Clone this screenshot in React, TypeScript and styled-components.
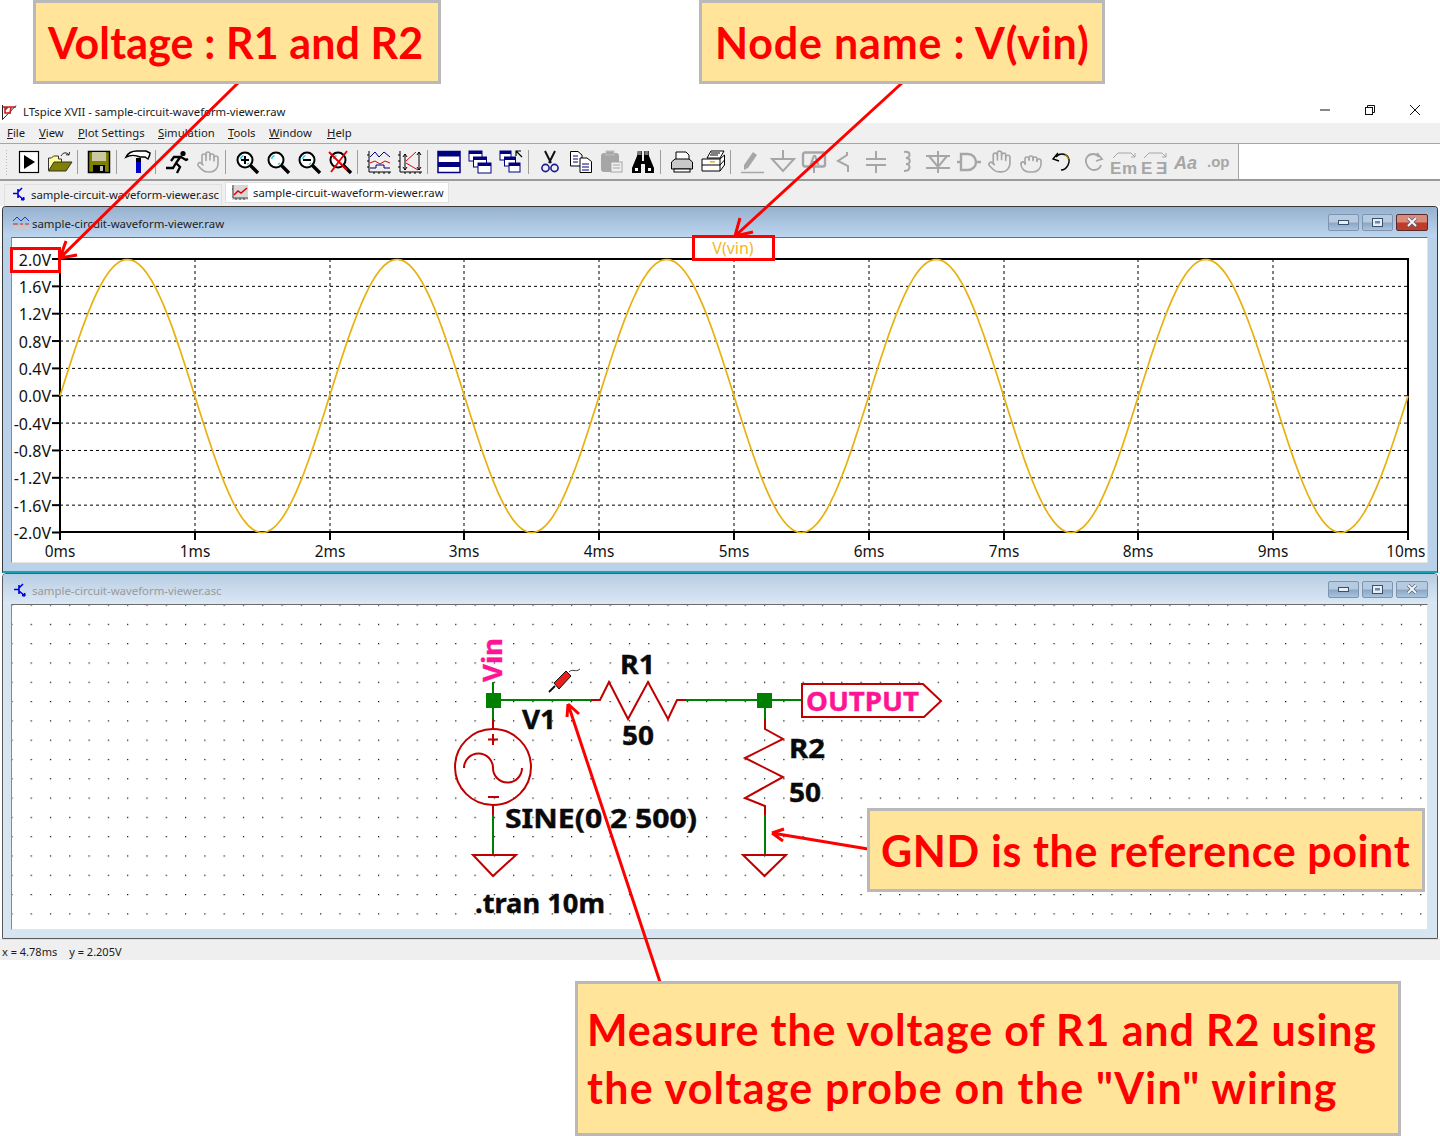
import React from 'react';
import styled, { createGlobalStyle } from 'styled-components';
import { Hand, Grab } from 'lucide-react';

const Global = createGlobalStyle`
  html, body { margin: 0; padding: 0; background: #fff; }
  body { font-family: "Noto Sans", "Open Sans", sans-serif; }
`;

const Page = styled.div`
  position: relative; width: 1440px; height: 1136px; padding-top: 100px;
  box-sizing: border-box; overflow: hidden; background: #fff; color: #1a1a1a;
`;
const TitleBar = styled.div`
  display: flex; align-items: center; height: 23px; padding: 0 0 0 2px; font-size: 11.3px; background: #fff;
`;
const AppTitle = styled.span`
  margin-left: 6px; flex: 1;
`;
const WinControls = styled.div`
  display: flex; align-items: center; padding-right: 19px; gap: 33px; padding-bottom: 3px;
`;
const MenuBar = styled.nav`
  display: flex; align-items: center; height: 20px; padding: 0 0 2px 7px; box-sizing: border-box; background: #f0f0f0; font-size: 11.3px;
`;
const MenuItem = styled.span<{ $w: number }>`
  width: ${p => p.$w}px; white-space: nowrap;
`;
const ToolbarRow = styled.div`
  display: flex; height: 38px; box-sizing: border-box; border-top: 1px solid #a6a6a6; border-bottom: 2px solid #9a9a9a; background: #fff;
`;
const Toolbar = styled.div`
  display: flex; align-items: center; width: 1239px; box-sizing: border-box; background: #efefef; border-right: 1px solid #a6a6a6;
`;
const Grip = styled.div`
  width: 13px; height: 26px; flex: none; box-sizing: border-box; margin-left: 0;
  background-image: radial-gradient(#b5b5b5 0.8px, transparent 1px);
  background-size: 3px 3px; background-repeat: repeat-y; background-position: 5px 0;
`;
const ToolButton = styled.div`
  width: 31px; height: 24px; flex: none; display: flex; align-items: center; justify-content: center;
  svg { display: block; overflow: visible; }
`;
const ToolSep = styled.div`
  width: 8px; height: 24px; flex: none; box-sizing: border-box; padding-left: 2px;
  &::before { content: ''; display: block; width: 1px; height: 24px; background: #9d9d9d; }
`;
const TabStrip = styled.div`
  display: flex; align-items: flex-end; height: 25px; box-sizing: border-box; padding: 0 0 0 4px; gap: 3px; background: #efefef;
`;
const Tab = styled.div<{ $active?: boolean }>`
  display: flex; align-items: center; box-sizing: border-box; font-size: 11.3px; white-space: nowrap;
  height: ${p => (p.$active ? 21 : 22)}px; width: ${p => (p.$active ? 224 : 218)}px;
  margin-bottom: ${p => (p.$active ? 3 : 0)}px; padding: 0 0 ${p => (p.$active ? 0 : 2)}px ${p => (p.$active ? 6 : 8)}px; gap: 5px;
  background: ${p => (p.$active ? '#fff' : '#efefef')};
  border: 1px solid #e0e0e0; border-bottom-color: ${p => (p.$active ? '#e0e0e0' : 'transparent')};
`;
const MdiWindow = styled.section<{ $active?: boolean }>`
  height: ${p => (p.$active ? 367 : 366)}px; margin: 0 2px; box-sizing: border-box; display: flex; flex-direction: column;
  border: 1px solid ${p => (p.$active ? '#3a3a3a' : '#5a5a5a')}; border-radius: 4px 4px 0 0;
  background: ${p => (p.$active ? '#b9d2ea' : '#d7e5f2')};
  ${p => (p.$active ? 'border-bottom-color:#17a2b4; border-bottom-width:2px;' : '')}
`;
const MdiTitle = styled.header<{ $active?: boolean }>`
  display: flex; align-items: center; flex: none; height: 30px; padding: 0 9px 0 9px; box-sizing: border-box;
  background: ${p => (p.$active ? 'linear-gradient(#96b1cf, #bdd5ee)' : 'linear-gradient(#b8cde2, #dbe8f5)')};
  border-radius: 3px 3px 0 0;
`;
const CaptionIcon = styled.span`
  width: 17px; flex: none; display: flex; justify-content: center; padding-top: 3px;
`;
const MdiCaption = styled.span<{ $active?: boolean }>`
  flex: 1; margin-left: 3px; padding-top: 3px; font-size: 11.4px; color: ${p => (p.$active ? '#222' : '#9a9a9a')};
`;
const CaptionGroup = styled.div`
  display: flex; gap: 3px;
`;
const CaptionButton = styled.div<{ $kind: 'min' | 'max' | 'close'; $active?: boolean }>`
  width: ${p => (p.$kind === 'close' ? 32 : 31)}px; height: 17px; box-sizing: border-box; border-radius: 2px;
  display: flex; align-items: center; justify-content: center;
  border: 1px solid ${p => (p.$kind === 'close' && p.$active ? '#5a2a2a' : '#7e93ad')};
  background: ${p => (p.$kind === 'close' && p.$active
    ? 'linear-gradient(#d98b7c 0 45%, #c03a28 55%, #b8402e)'
    : 'linear-gradient(#b7cbe0 0 45%, #8ba7c4 55%, #a9c4df)')};
`;
const Client = styled.div`
  flex: 1; margin: 0 9px 8px 8px; background: #fff; box-sizing: border-box;
  border-top: 1px solid #6c6c6c; border-left: 1px solid #8a8a8a; border-right: 1px solid #e4e4e4; border-bottom: 1px solid #e4e4e4;
  min-height: 0; svg { display: block; }
`;
const StatusBar = styled.footer`
  display: flex; gap: 12px; height: 21px; align-items: center; padding: 3px 0 0 2px; background: #efefef;
  font-size: 11px; border-top: 1px solid #e2e2e2; box-sizing: border-box;
`;
const Overlay = styled.svg`
  position: absolute; left: 0; top: 0; width: 1440px; height: 1136px; pointer-events: none;
`;
const Callout = styled.div<{ $x: number; $y: number; $w: number; $h: number; $pad: number; $ls?: number }>`
  position: absolute; left: ${p => p.$x}px; top: ${p => p.$y}px; width: ${p => p.$w}px; height: ${p => p.$h}px;
  box-sizing: border-box; border: 3px solid #b9b9b9; background: #ffe499; color: #ff0000;
  font-family: "Lato", "Open Sans", sans-serif; font-weight: 700; font-size: 43px; letter-spacing: ${p => p.$ls ?? 0}px;
  padding-left: ${p => p.$pad}px; display: flex; flex-direction: column; justify-content: center; white-space: pre;
`;
const CalloutLine = styled.div<{ $ls: number }>`
  line-height: 58px; letter-spacing: ${p => p.$ls}px;
`;
const PlotText = styled.text<{ $small?: boolean }>`
  font-family: "Noto Sans", sans-serif; font-size: ${p => (p.$small ? 15.4 : 16)}px; fill: #111;
`;
const SchemText = styled.text<{ $pink?: boolean }>`
  font-family: "Noto Sans", sans-serif; font-weight: 700; font-size: 26px; fill: ${p => (p.$pink ? '#ff1493' : '#0a0a0a')};
  stroke: ${p => (p.$pink ? '#ff1493' : '#0a0a0a')}; stroke-width: 0.4px;
`;
const IconText = styled.text`
  font-family: "Liberation Sans", sans-serif; font-weight: 700; fill: #a6a6a6;
`;

const Ico: React.FC<{ children: React.ReactNode; w?: number }> = ({ children, w = 24 }) => (
  <svg width={w} height={24} viewBox={`0 0 ${w} 24`} fill="none" aria-hidden="true">{children}</svg>
);
const G = '#a6a6a6';

const Mag: React.FC<{ children?: React.ReactNode }> = ({ children }) => (
  <Ico>
    <circle cx="10" cy="10" r="7.5" fill="#fff" stroke="#000" strokeWidth="2" />
    <path d="M5.5 9a5 5 0 0 1 3-3.5M14 13l-2 1.5" stroke="#30d0e0" strokeWidth="1.5" />
    <path d="M15.5 15.5L23 23" stroke="#000" strokeWidth="3.4" />
    {children}
  </Ico>
);

const Cascade: React.FC<{ arrow?: boolean }> = ({ arrow }) => (
  <Ico>
    {[[1, 1], [5.5, 7], [10, 13]].map(([x, y]) => (
      <g key={x}>
        <rect x={x} y={y} width={arrow ? 11 : 13} height={arrow ? 9 : 10} fill="#fff" stroke="#000080" />
        <rect x={x} y={y} width={arrow ? 11 : 13} height="3" fill="#000080" />
      </g>
    ))}
    {arrow && <path d="M17 6V1h5M17 1l6 6" stroke="#000" strokeWidth="1.2" />}
  </Ico>
);

const tools: (React.ReactNode | 'sep')[] = [
  <Ico><rect x="2.5" y="1.5" width="19" height="21" fill="#fff" stroke="#000" strokeWidth="1.2" /><path d="M7 5L18 12L7 19Z" fill="#000" /></Ico>,
  <Ico w={26}><path d="M1.5 20V8h3l2-2h5v3h3v11z" fill="#ffff99" stroke="#333" /><path d="M1.5 21L7 12H25L19 21Z" fill="#808000" stroke="#333" /><path d="M14 6C16 2 20 2 22 5M22 5l-3-.3M22 5l.5-3" stroke="#222" /></Ico>,
  'sep',
  <Ico><rect x="1.5" y="1.5" width="21" height="21" fill="#808000" stroke="#000" strokeWidth="1.5" /><rect x="5" y="2" width="14" height="9" fill="#c9c9a2" /><rect x="6" y="15" width="12" height="7" fill="#000" /><rect x="13" y="16" width="3" height="5" fill="#c0c0c0" /></Ico>,
  'sep',
  <Ico w={26}><path d="M1 7C3 3 7 1 12 1H21L25 3C25 5 24 7 23 9L20 7H15C11 5 5 5 1 7Z" fill="#fff" stroke="#000" strokeWidth="1.5" /><rect x="11" y="8" width="5" height="15" fill="#0000c8" /><rect x="11" y="8" width="5" height="4" fill="#000" /></Ico>,
  'sep',
  <Ico w={24}><circle cx="18" cy="3.5" r="2.6" fill="#000" /><path d="M16 6L11 13M16 7L21 10L23 9M15 7L9 7L6 11M11 13L15 17L12 23M11 13L8 18L1 18" stroke="#000" strokeWidth="2.3" /></Ico>,
  <Hand size={24} color={G} strokeWidth={1.6} />,
  'sep',
  <Mag><path d="M10 6V14M6 10H14" stroke="#000" strokeWidth="2" /></Mag>,
  <Mag />,
  <Mag><path d="M6 10H14" stroke="#000" strokeWidth="2" /></Mag>,
  <Mag><path d="M1 2L19 20M19 1L3 22" stroke="#e00000" strokeWidth="1.8" /></Mag>,
  'sep',
  <Ico><path d="M2 1V22H24M2 5H0M2 11H0M2 17H0M7 22v2M12 22v2M17 22v2M22 22v2" stroke="#000" /><path d="M3 7L8 2L12 7L17 2L23 7" stroke="#000080" /><path d="M3 13L8 11L13 14L18 11L23 13" stroke="#e00000" /><path d="M3 18H9V15H17V18H23" stroke="#000080" /></Ico>,
  <Ico><path d="M2 1V22H24M2 5H0M2 11H0M2 17H0M7 22v2M12 22v2M17 22v2M22 22v2" stroke="#000" /><path d="M8 11L18 2M8 13L20 20" stroke="#e00000" /><path d="M7 4V20M7 4l-2 3M7 4l2 3M7 20l-2-3M7 20l2-3M21 2V20M21 2l-2 3M21 2l2 3M21 20l-2-3M21 20l2-3" stroke="#000" /></Ico>,
  'sep',
  <Ico><rect x="1" y="1.5" width="22" height="21" fill="#fff" stroke="#000080" strokeWidth="1.5" /><rect x="1" y="1.5" width="22" height="5" fill="#000080" /><rect x="1" y="12" width="22" height="5" fill="#000080" /></Ico>,
  <Cascade />,
  <Cascade arrow />,
  'sep',
  <Ico><path d="M7 1L13 13M17 1L11 13" stroke="#111" strokeWidth="2" /><circle cx="7.5" cy="18" r="3.6" stroke="#1a1a90" strokeWidth="1.6" /><circle cx="16.5" cy="18" r="3.6" stroke="#1a1a90" strokeWidth="1.6" /></Ico>,
  <Ico><path d="M1.5 1.5H9L13 5V16H1.5Z" fill="#fff" stroke="#000" /><path d="M11 8H18L22.5 11.5V22.5H11Z" fill="#fff" stroke="#000" /><path d="M4 6H9M4 9H9M4 12H9M13 14H20M13 17H20M13 20H20" stroke="#000080" /></Ico>,
  <Ico><rect x="1" y="3" width="18" height="19" rx="3" fill={G} /><rect x="6" y="1" width="8" height="4" fill={G} stroke="#c0c0c0" /><rect x="11" y="12" width="11" height="10" fill="#efefef" stroke={G} /><path d="M13 15H20M13 18H20" stroke={G} /></Ico>,
  <Ico><path d="M7 1h4v10h2V1h4v0l1 0v5l5 12v5H14V14h-4v9H1v-5L6 6Z" fill="#000" /><path d="M6.5 1h4v4h-4zM13.5 1h4v4h-4z" fill="#777" /><path d="M4 18h3v3H4zM17 18h3v3h-3z" fill="#fff" /></Ico>,
  'sep',
  <Ico><path d="M6 9V2H16L19 5V9" fill="#fff" stroke="#000" /><path d="M1.5 12L5 9H19L22.5 12V19H1.5Z" fill="#c9c9c9" stroke="#000" /><rect x="4" y="19" width="16" height="3" fill="#fff" stroke="#000" /></Ico>,
  <Ico><path d="M6 8L10 1H23L19 8Z" fill="#fff" stroke="#000" /><path d="M1 9H19L23.5 5V15L19 21H1Z" fill="#fff" stroke="#000" /><path d="M1 15H19M19 9V21M19 15L23.5 10M10 3H19M9 5H17" stroke="#000" /><rect x="9" y="11" width="5" height="1.5" fill="#e0c000" /></Ico>,
  'sep',
  <Ico><path d="M4 15L13 2L17 5L8 18L4 20Z" fill={G} /><path d="M1 22.5H24" stroke={G} strokeWidth="1.5" /></Ico>,
  <Ico><path d="M12 0V8M1 9H23L12 21Z" stroke={G} strokeWidth="2" /></Ico>,
  <Ico><rect x="1" y="2.5" width="22" height="14" rx="2" stroke={G} strokeWidth="2.4" /><IconText x="7" y="15" fontSize="15">A</IconText><path d="M12 16.5V23" stroke={G} strokeWidth="2" /></Ico>,
  <Ico><path d="M14 2V5L5 11L15 16V22" stroke={G} strokeWidth="2" /></Ico>,
  <Ico><path d="M12 1V9M2 9H22M2 15H22M12 15V23" stroke={G} strokeWidth="2" /></Ico>,
  <Ico><path d="M9 2C16 1 16 7 11 8C16 8 16 14 11 14C16 14 16 21 9 21" stroke={G} strokeWidth="2" /></Ico>,
  <Ico><path d="M0 6H24M3 6L12 17L21 6M0 18H24M12 1V23" stroke={G} strokeWidth="2" /></Ico>,
  <Ico><path d="M0 12H5M4 4H11A8 8 0 0 1 11 20H4ZM19 12H24" stroke={G} strokeWidth="2.4" /></Ico>,
  <Hand size={25} color={G} strokeWidth={1.6} />,
  <Grab size={24} color={G} strokeWidth={1.6} />,
  <Ico><path d="M6 7C9 3 15 3 18 7C21 12 17 20 11 20" stroke="#000" strokeWidth="1.4" /><path d="M15 4.5C17 6 18 7 18.5 9" stroke="#a09000" strokeWidth="1.4" /><path d="M8 3L3 9L9 11" stroke="#000" strokeWidth="1.4" /></Ico>,
  <Ico><path d="M18 7C15 3 9 3 6 7C3 12 7 20 13 20C17 20 19 18 20 15" stroke={G} strokeWidth="1.8" /><path d="M16 3L21 9L15 11" stroke={G} strokeWidth="1.8" /></Ico>,
  <Ico w={27}><path d="M3 8L8 3H21L25 7M25 7H21M25 7V3" stroke={G} /><IconText x="0" y="24" fontSize="17">E</IconText><IconText x="12" y="24" fontSize="17">m</IconText></Ico>,
  <Ico w={27}><path d="M3 8L8 3H21L25 7M25 7H21M25 7V3" stroke={G} /><IconText x="0" y="24" fontSize="17">E</IconText><IconText x="15" y="24" fontSize="17">Ǝ</IconText></Ico>,
  <Ico><IconText x="0" y="19" fontSize="18" fontStyle="italic">Aa</IconText></Ico>,
  <Ico><IconText x="2" y="17" fontSize="15">.op</IconText></Ico>,
];

const TransistorIcon = () => (
  <svg width="13" height="15" viewBox="0 0 13 15" fill="none" aria-hidden="true">
    <path d="M5 2V11M0 6.5H5M5 5L9 1M5 8L11 13M11 13L8 12.5M11 13L10.5 10" stroke="#0000e0" strokeWidth="1.6" />
  </svg>
);
const WaveIcon: React.FC<{ w?: number }> = ({ w = 16 }) => (
  <svg width={w} height="15" viewBox="0 0 16 15" fill="none" aria-hidden="true">
    <rect x="0" y="0" width="16" height="15" fill="#d8d8d8" />
    <path d="M1 0V13H16M1 4H0M4 13v2M8 13v2M12 13v2" stroke="#444" />
    <path d="M2 10L6 6L9 8L15 3" stroke="#e00000" strokeWidth="1.5" />
  </svg>
);
const MiniPlotIcon = () => (
  <svg width="16" height="15" viewBox="0 0 16 15" fill="none" aria-hidden="true">
    <path d="M0 5L4 1L8 5L12 1L16 5" stroke="#1a3cc0" />
    <path d="M0 8H5M7 8H10M12 8H16" stroke="#d02020" />
    <rect x="0" y="10" width="16" height="4" fill="#c8c8c8" />
  </svg>
);

const sinePoints = () => {
  const p: string[] = [];
  for (let x = 60; x <= 1408; x += 2) {
    const t = (x - 60) / 134.8;
    p.push(`${x},${(396 - 136.5 * Math.sin(Math.PI * t)).toFixed(1)}`);
  }
  return p.join(' ');
};

const xTicks = [60, 195, 330, 464, 599, 734, 869, 1004, 1138, 1273, 1408];
const yLabels = ['2.0V', '1.6V', '1.2V', '0.8V', '0.4V', '0.0V', '-0.4V', '-0.8V', '-1.2V', '-1.6V', '-2.0V'];

const Plot = () => (
  <svg width="1414" height="325" viewBox="12 238 1414 325" aria-label="waveform">
    {yLabels.map((_, i) => {
      const y = 259 + i * 27.35;
      return (
        <g key={i}>
          {i > 0 && i < 10 && <line x1="60" x2="1408" y1={y} y2={y} stroke="#000" strokeDasharray="3 3" />}
          <line x1="52" x2="60" y1={y} y2={y} stroke="#000" strokeWidth="2" />
        </g>
      );
    })}
    {xTicks.map((x, i) => (
      <g key={x}>
        {i > 0 && i < 10 && <line x1={x} x2={x} y1="259" y2="532" stroke="#000" strokeDasharray="3 3" />}
        <line x1={x} x2={x} y1="532" y2="540" stroke="#000" strokeWidth="2" />
      </g>
    ))}
    <rect x="60" y="259" width="1348" height="273" fill="none" stroke="#000" strokeWidth="2" />
    <polyline points={sinePoints()} fill="none" stroke="#e8b010" strokeWidth="1.7" />
    {yLabels.map((l, i) => (
      <PlotText key={l} x="51" y={259 + i * 27.35 + 6.5} textAnchor="end">{l}</PlotText>
    ))}
    {xTicks.map((x, i) => (
      <PlotText $small key={x} x={i === 10 ? 1425.5 : x} y="556.5" textAnchor={i === 10 ? 'end' : 'middle'}>{i}ms</PlotText>
    ))}
    <PlotText x="733" y="254" textAnchor="middle" style={{ fill: '#f0b828' }}>V(vin)</PlotText>
  </svg>
);

const RED = '#c00000';
const GRN = '#008000';
const Schematic = () => (
  <svg width="1414" height="325" viewBox="12 605 1414 325" aria-label="schematic">
    <defs>
      <pattern id="grid" x="11.3" y="604.5" width="19.3" height="19.3" patternUnits="userSpaceOnUse">
        <rect x="0" y="0" width="1.2" height="1.2" fill="#000" />
      </pattern>
    </defs>
    <rect x="12" y="605" width="1414" height="325" fill="url(#grid)" />
    <g fill="none" strokeWidth="2">
      <path d="M493 682V729M493 805V855M493 700H591M686 700H802M765 700V729M765 806V855" stroke={GRN} />
      <path d="M591 700H600L609 682L628 719L648 682L668 719L677 700H686" stroke={RED} />
      <path d="M765 719V729L783 739L745 758L783 777L745 798L765 806V815" stroke={RED} />
      <path d="M493 719V729M493 805V815" stroke={RED} />
      <circle cx="493" cy="767" r="38" stroke={RED} />
      <path d="M464 768A14.5 14.5 0 0 1 493 768A14.5 14.5 0 0 0 522 768" stroke={RED} />
      <path d="M493 734V745M488 739.500H498M488 797H499" stroke={RED} />
      <path d="M473 855H516L493 876ZM743 855H786L764.5 876Z" stroke={RED} />
      <path d="M802 684H923L941 701L924 717H802Z" stroke={RED} fill="#fff" />
      <path d="M569 672C573 668 575 673 580 669" stroke="#333" strokeWidth="1" />
    </g>
    <rect x="486" y="693" width="15" height="15" fill={GRN} />
    <rect x="757" y="693" width="15" height="15" fill={GRN} />
    <path d="M554 683L566 671L571 676L559 689Z" fill="#e82020" stroke="#111" />
    <path d="M555 686L549 692" stroke="#111" strokeWidth="2" />
    <SchemText x="620" y="674" textLength="35" lengthAdjust="spacingAndGlyphs">R1</SchemText>
    <SchemText x="622" y="745" textLength="32" lengthAdjust="spacingAndGlyphs">50</SchemText>
    <SchemText x="522" y="729" textLength="34" lengthAdjust="spacingAndGlyphs">V1</SchemText>
    <SchemText x="789" y="758" textLength="36" lengthAdjust="spacingAndGlyphs">R2</SchemText>
    <SchemText x="789" y="802" textLength="32" lengthAdjust="spacingAndGlyphs">50</SchemText>
    <SchemText x="505" y="828" textLength="192" lengthAdjust="spacingAndGlyphs">SINE(0 2 500)</SchemText>
    <SchemText x="475" y="913" textLength="130" lengthAdjust="spacingAndGlyphs">.tran 10m</SchemText>
    <SchemText $pink x="806" y="711" textLength="113" lengthAdjust="spacingAndGlyphs">OUTPUT</SchemText>
    <SchemText $pink transform="translate(502 682) rotate(-90)" x="0" y="0" textLength="44" lengthAdjust="spacingAndGlyphs">Vin</SchemText>
  </svg>
);

const CaptionButtons: React.FC<{ active?: boolean }> = ({ active }) => (
  <CaptionGroup>
    <CaptionButton $kind="min" $active={active}>
      <svg width="11" height="5" viewBox="0 0 11 5" aria-hidden="true"><rect x="0.5" y="0.500" width="10" height="4" fill="#e8eef5" stroke="#39506c" /></svg>
    </CaptionButton>
    <CaptionButton $kind="max" $active={active}>
      <svg width="11" height="9" viewBox="0 0 11 9" aria-hidden="true"><rect x="0.5" y="0.5" width="10" height="8" fill="#e8eef5" stroke="#39506c" /><rect x="3" y="3" width="5" height="2.500" fill="#6f88a6" /></svg>
    </CaptionButton>
    <CaptionButton $kind="close" $active={active}>
      <svg width="12" height="10" viewBox="0 0 12 10" aria-hidden="true"><path d="M2 1L10 9M10 1L2 9" stroke="#4f6075" strokeWidth="3.4" /><path d="M2 1L10 9M10 1L2 9" stroke="#f4f6f9" strokeWidth="2" /></svg>
    </CaptionButton>
  </CaptionGroup>
);

const menus: [string, string, number][] = [
  ['F', 'ile', 32], ['V', 'iew', 39], ['P', 'lot Settings', 80], ['S', 'imulation', 70], ['T', 'ools', 41], ['W', 'indow', 58], ['H', 'elp', 40],
];

const NAME = 'sample-circuit-waveform-viewer';

export default function App() {
  return (
    <Page>
      <Global />
      <TitleBar>
        <svg width="15" height="16" viewBox="0 0 15 16" fill="none" aria-hidden="true">
          <path d="M0.5 1V15.500L14 1.500" stroke="#222" />
          <path d="M1 3H14M3 3L3 9H7M9 3L8 10M3 6L6 3" stroke="#c02020" strokeWidth="1.6" />
        </svg>
        <AppTitle>{`LTspice XVII - ${NAME}.raw`}</AppTitle>
        <WinControls>
          <svg width="12" height="12" viewBox="0 0 12 12" aria-hidden="true"><path d="M1 6H11" stroke="#111" /></svg>
          <svg width="12" height="12" viewBox="0 0 12 12" fill="none" aria-hidden="true"><rect x="1.5" y="3.5" width="7" height="7" stroke="#111" /><path d="M3.500 3.500V1.500H10.500V8.500H8.500" stroke="#111" /></svg>
          <svg width="12" height="12" viewBox="0 0 12 12" aria-hidden="true"><path d="M1 1L11 11M11 1L1 11" stroke="#111" /></svg>
        </WinControls>
      </TitleBar>
      <MenuBar>
        {menus.map(([u, r, w]) => (
          <MenuItem key={u} $w={w}><u>{u}</u>{r}</MenuItem>
        ))}
      </MenuBar>
      <ToolbarRow>
        <Toolbar>
          <Grip />
          {tools.map((t, i) => (t === 'sep' ? <ToolSep key={i} /> : <ToolButton key={i}>{t}</ToolButton>))}
        </Toolbar>
      </ToolbarRow>
      <TabStrip>
        <Tab><TransistorIcon />{NAME}.asc</Tab>
        <Tab $active><WaveIcon />{NAME}.raw</Tab>
      </TabStrip>
      <MdiWindow $active>
        <MdiTitle $active>
          <CaptionIcon><MiniPlotIcon /></CaptionIcon>
          <MdiCaption $active>{NAME}.raw</MdiCaption>
          <CaptionButtons active />
        </MdiTitle>
        <Client><Plot /></Client>
      </MdiWindow>
      <MdiWindow>
        <MdiTitle>
          <CaptionIcon><TransistorIcon /></CaptionIcon>
          <MdiCaption>{NAME}.asc</MdiCaption>
          <CaptionButtons />
        </MdiTitle>
        <Client><Schematic /></Client>
      </MdiWindow>
      <StatusBar><span>x = 4.78ms</span><span>y = 2.205V</span></StatusBar>

      <Overlay viewBox="0 0 1440 1136" fill="none">
        <g stroke="#ff0000" strokeWidth="3">
          <rect x="11.500" y="248.500" width="48" height="23" />
          <rect x="693.500" y="236.500" width="80" height="23" />
          <path d="M238 83L60 258M60 258L77 255M60 258L66 241" />
          <path d="M902 83L735 236M735 236L753 232M735 236L740 218" />
          <path d="M660 982L568 704M568 704L579 714M568 704L567 717" />
          <path d="M868 849L772 833M772 833L784 829M772 833L783 841" />
        </g>
      </Overlay>
      <Callout $x={33} $y={0} $w={408} $h={84} $pad={12} $ls={0.1}>Voltage : R1 and R2</Callout>
      <Callout $x={699} $y={0} $w={406} $h={84} $pad={13} $ls={0.8}>Node name : V(vin)</Callout>
      <Callout $x={867} $y={808} $w={558} $h={84} $pad={11} $ls={0.6}>GND is the reference point</Callout>
      <Callout $x={575} $y={981} $w={826} $h={155} $pad={9}>
        <CalloutLine $ls={0.85}>Measure the voltage of R1 and R2 using</CalloutLine>
        <CalloutLine $ls={1.2}>{'the voltage probe on the "Vin" wiring'}</CalloutLine>
      </Callout>
    </Page>
  );
}
